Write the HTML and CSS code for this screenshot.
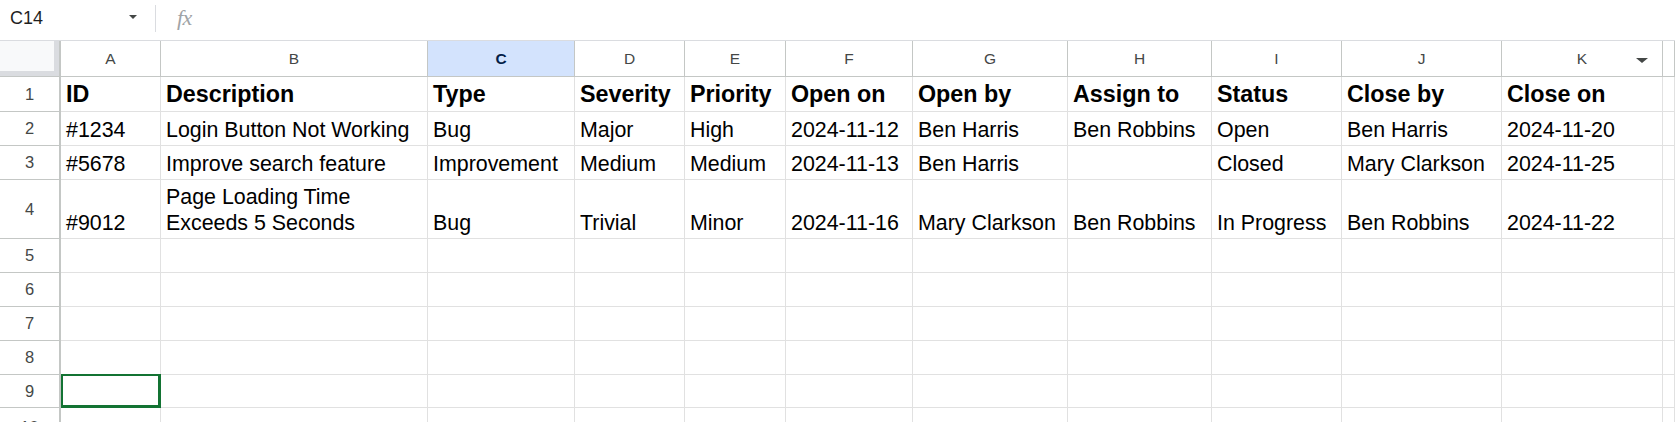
FILE: index.html
```html
<!DOCTYPE html>
<html>
<head>
<meta charset="utf-8">
<link rel="stylesheet" href="styles.css">
</head>
<body>
<div class="toolbar">
  <div class="namebox"><span class="ref">C14</span><span class="caret"></span></div>
  <div class="sep"></div>
  <div class="fx">fx</div>
</div>
<div class="sheet">
  <div class="corner"></div>
  <div class="ch">A</div>
  <div class="ch">B</div>
  <div class="ch sel">C</div>
  <div class="ch">D</div>
  <div class="ch">E</div>
  <div class="ch">F</div>
  <div class="ch">G</div>
  <div class="ch">H</div>
  <div class="ch">I</div>
  <div class="ch">J</div>
  <div class="ch k">K<span class="kcaret"></span></div>
  <div class="ch"></div>

  <div class="rh">1</div>
  <div class="c b">ID</div>
  <div class="c b">Description</div>
  <div class="c b">Type</div>
  <div class="c b">Severity</div>
  <div class="c b">Priority</div>
  <div class="c b">Open on</div>
  <div class="c b">Open by</div>
  <div class="c b">Assign to</div>
  <div class="c b">Status</div>
  <div class="c b">Close by</div>
  <div class="c b">Close on</div>
  <div class="c"></div>

  <div class="rh">2</div>
  <div class="c">#1234</div>
  <div class="c">Login Button Not Working</div>
  <div class="c">Bug</div>
  <div class="c">Major</div>
  <div class="c">High</div>
  <div class="c">2024-11-12</div>
  <div class="c">Ben Harris</div>
  <div class="c">Ben Robbins</div>
  <div class="c">Open</div>
  <div class="c">Ben Harris</div>
  <div class="c">2024-11-20</div>
  <div class="c"></div>

  <div class="rh">3</div>
  <div class="c">#5678</div>
  <div class="c">Improve search feature</div>
  <div class="c">Improvement</div>
  <div class="c">Medium</div>
  <div class="c">Medium</div>
  <div class="c">2024-11-13</div>
  <div class="c">Ben Harris</div>
  <div class="c"></div>
  <div class="c">Closed</div>
  <div class="c">Mary Clarkson</div>
  <div class="c">2024-11-25</div>
  <div class="c"></div>

  <div class="rh">4</div>
  <div class="c">#9012</div>
  <div class="c wrap">Page Loading Time Exceeds 5 Seconds</div>
  <div class="c">Bug</div>
  <div class="c">Trivial</div>
  <div class="c">Minor</div>
  <div class="c">2024-11-16</div>
  <div class="c">Mary Clarkson</div>
  <div class="c">Ben Robbins</div>
  <div class="c">In Progress</div>
  <div class="c">Ben Robbins</div>
  <div class="c">2024-11-22</div>
  <div class="c"></div>

  <div class="rh">5</div>
  <div class="c"></div><div class="c"></div><div class="c"></div><div class="c"></div><div class="c"></div><div class="c"></div><div class="c"></div><div class="c"></div><div class="c"></div><div class="c"></div><div class="c"></div><div class="c"></div>
  <div class="rh">6</div>
  <div class="c"></div><div class="c"></div><div class="c"></div><div class="c"></div><div class="c"></div><div class="c"></div><div class="c"></div><div class="c"></div><div class="c"></div><div class="c"></div><div class="c"></div><div class="c"></div>
  <div class="rh">7</div>
  <div class="c"></div><div class="c"></div><div class="c"></div><div class="c"></div><div class="c"></div><div class="c"></div><div class="c"></div><div class="c"></div><div class="c"></div><div class="c"></div><div class="c"></div><div class="c"></div>
  <div class="rh">8</div>
  <div class="c"></div><div class="c"></div><div class="c"></div><div class="c"></div><div class="c"></div><div class="c"></div><div class="c"></div><div class="c"></div><div class="c"></div><div class="c"></div><div class="c"></div><div class="c"></div>
  <div class="rh">9</div>
  <div class="c active"></div><div class="c"></div><div class="c"></div><div class="c"></div><div class="c"></div><div class="c"></div><div class="c"></div><div class="c"></div><div class="c"></div><div class="c"></div><div class="c"></div><div class="c"></div>
  <div class="rh">10</div>
  <div class="c"></div><div class="c"></div><div class="c"></div><div class="c"></div><div class="c"></div><div class="c"></div><div class="c"></div><div class="c"></div><div class="c"></div><div class="c"></div><div class="c"></div><div class="c"></div>
</div>
</body>
</html>
```
FILE: styles.css
```css
html, body {
  margin: 0;
  padding: 0;
  background: #ffffff;
  overflow: hidden;
  width: 1675px;
  height: 422px;
}

.toolbar {
  height: 41px;
  box-sizing: border-box;
  border-bottom: 1px solid #dadce0;
  display: flex;
  align-items: center;
}

.namebox {
  width: 145px;
  box-sizing: border-box;
  padding: 0 8px 0 10px;
  display: flex;
  align-items: center;
  justify-content: space-between;
  height: 100%;
}

.ref {
  font-family: "Liberation Sans", Arial, sans-serif;
  font-size: 18px;
  color: #1f1f1f;
  margin-top: -3px;
}

.caret {
  width: 0;
  height: 0;
  border-left: 4px solid transparent;
  border-right: 4px solid transparent;
  border-top: 4px solid #444746;
  margin-top: -6px;
}

.sep {
  width: 1px;
  height: 27px;
  background: #dadce0;
  margin-left: 10px;
  margin-top: -4px;
}

.fx {
  margin-left: 21px;
  font-family: "Liberation Serif", "Times New Roman", serif;
  font-style: italic;
  font-size: 22px;
  color: #a0a3a6;
  margin-top: -5px;
  letter-spacing: -0.5px;
}

.sheet {
  display: grid;
  grid-template-columns: 61px 100px 267px 147px 110px 101px 127px 155px 144px 130px 160px 161px 1fr;
  grid-template-rows: 36px 35px 34px 34px 59px 34px 34px 34px 34px 33px 40px;
}

.corner {
  background: #f8f9fa;
  box-sizing: border-box;
  border-right: 2px solid #c4c7c5;
  border-bottom: 1px solid #c4c7c5;
  box-shadow: inset -5px -5px 0 #dadce0;
}

.ch {
  position: relative;
  box-sizing: border-box;
  border-right: 1px solid #c4c7c5;
  border-bottom: 1px solid #c4c7c5;
  display: flex;
  align-items: center;
  justify-content: center;
  font-family: "Liberation Sans", Arial, sans-serif;
  font-size: 15.5px;
  color: #444746;
}

.ch.sel {
  background: #d3e3fd;
  color: #041e49;
  font-weight: bold;
}

.kcaret {
  position: absolute;
  right: 14px;
  top: 17px;
  width: 0;
  height: 0;
  border-left: 6px solid transparent;
  border-right: 6px solid transparent;
  border-top: 5px solid #444746;
}

.rh {
  box-sizing: border-box;
  border-right: 2px solid #c4c7c5;
  border-bottom: 1px solid #c4c7c5;
  display: flex;
  align-items: center;
  justify-content: center;
  font-family: "Liberation Sans", Arial, sans-serif;
  font-size: 16.5px;
  color: #444746;
}

.c {
  position: relative;
  box-sizing: border-box;
  border-right: 1px solid #e1e1e1;
  border-bottom: 1px solid #e1e1e1;
  display: flex;
  align-items: flex-end;
  padding: 0 5px 2px 5px;
  font-family: "Liberation Sans", Arial, sans-serif;
  font-size: 21.4px;
  line-height: 26px;
  color: #000000;
  white-space: nowrap;
  overflow: hidden;
}

.c.b {
  font-weight: bold;
  font-size: 23.3px;
  padding-bottom: 4px;
}

.c.wrap {
  white-space: normal;
}

.c.active {
  overflow: visible;
}

.c.active::after {
  content: "";
  position: absolute;
  left: 0;
  top: -1px;
  right: -1px;
  bottom: -1px;
  border: 3px solid #137333;
  border-top-width: 2px;
  border-left-width: 2px;
}
```
